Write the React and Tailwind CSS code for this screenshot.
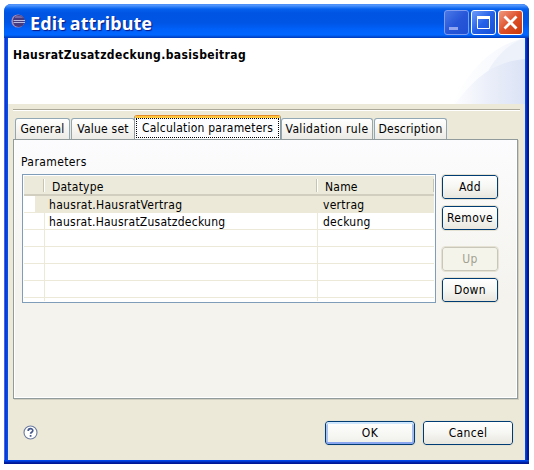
import React from "react";

const tabs = [
  { label: "General", box: "w-[55px] ml-[2px]" },
  { label: "Value set", box: "w-[64px] ml-[1px]" },
  { label: "Calculation parameters", active: true },
  { label: "Validation rule", box: "w-[92px] tracking-[0.35px]" },
  { label: "Description", box: "w-[73px] ml-[1px]" },
];

const rows = [
  { type: "hausrat.HausratVertrag", name: "vertrag", selected: true },
  { type: "hausrat.HausratZusatzdeckung", name: "deckung" },
  {},
  {},
  {},
  {},
];

function Tab({ tab }) {
  if (tab.active) {
    return (
      <div className="relative z-10 h-[24px] w-[147px] -ml-px shrink-0 rounded-t-[3px] border-x border-t border-x-[#919b9c] border-t-[#e68b2c] bg-[#fcfcfe]">
        <div className="h-[2px] bg-[#ffc73c]" />
        <div className="mx-[1px] flex h-[20px] items-center justify-center whitespace-nowrap border border-dotted border-black">
          {tab.label}
        </div>
      </div>
    );
  }
  return (
    <div
      className={`${tab.box} flex h-[21px] shrink-0 items-center justify-center whitespace-nowrap rounded-t-[3px] border-x border-t border-[#91a7b4] bg-linear-to-b from-white to-[#ecebe6]`}
    >
      {tab.label}
    </div>
  );
}

function Button({ label, size = "w-[56px]", primary, disabled }) {
  const look = disabled
    ? "border-[#c9c7ba] bg-[#f5f4ea] text-[#a1a192]"
    : primary
      ? "border-[#003c74] bg-linear-to-b from-white to-[#f0f0ea] shadow-[inset_0_2px_0_#cee7ff,inset_0_-2px_0_#89a6ee,inset_2px_0_0_#a9c4f2,inset_-2px_0_0_#a0bcf0]"
      : "border-[#003c74] bg-linear-to-b from-white via-[#f6f6f3] to-[#e8e6dd]";
  return (
    <button className={`${size} ${look} flex h-[24px] shrink-0 items-center justify-center rounded-[3px] border tracking-[0.35px] outline outline-[#e5e2d4]`}>
      {label}
    </button>
  );
}

function Eclipse() {
  return (
    <svg className="h-[14px] w-[14px] shrink-0" viewBox="0 0 14 14">
      <circle cx="7" cy="7" r="6.6" fill="#a98bb4" />
      <circle cx="7.8" cy="7" r="6" fill="#45397f" />
      <path d="M4 2.5Q7 .8 11 2.5L12 4H4z" fill="#7468a6" />
      <path d="M2.5 6.5H14M2.5 8.5H14" stroke="#b9bbe0" strokeWidth="1" />
    </svg>
  );
}

function Caption({ kind }) {
  const look = {
    min: "border-[#7f9cf0] bg-linear-to-br from-[#4a78e8] via-[#2856d8] to-[#1f4fd4]",
    max: "border-white bg-linear-to-br from-[#6d9bf8] via-[#2461e8] to-[#1550d8]",
    close: "border-white bg-linear-to-br from-[#ee9a80] via-[#dd4f28] to-[#c93806]",
  }[kind];
  return (
    <div className={`${look} h-[25px] w-[25px] rounded-[3px] border`}>
      <svg className="h-[23px] w-[23px]" viewBox="0 0 23 23" fill="none">
        {kind === "min" && <path d="M4 17.5h9" stroke="#92a5ee" strokeWidth="3" />}
        {kind === "max" && (
          <>
            <path d="M5.5 6v11.5h12V6" stroke="#fff" />
            <path d="M5 6.5h13" stroke="#fff" strokeWidth="3" />
          </>
        )}
        {kind === "close" && <path d="M5.5 5.5l12 12M17.5 5.5l-12 12" stroke="#fff" strokeWidth="2.8" />}
      </svg>
    </div>
  );
}

export default function App() {
  return (
    <div className="h-[470px] w-[534px] overflow-hidden bg-white pl-[4px] pt-[4px] font-['DejaVu_Sans_Condensed','DejaVu_Sans',sans-serif] text-[12px] leading-[16px] tracking-[0.22px] text-black [font-stretch:condensed]">
      <div className="flex h-[460px] w-[525px] flex-col overflow-hidden rounded-t-[7px] bg-[linear-gradient(90deg,#5068dc_0,#5068dc_1px,#0831d9_1px,#0655e8_4px,#0040e0_520px,#0046e8_522px,#001ea0_523px,#00138c_525px)]">
        <div className="flex h-[34px] shrink-0 items-center bg-[linear-gradient(180deg,#3f86f0_0,#5a9bff_1px,#2b7df5_3px,#0660ee_5px,#0054e3_9px,#0055e5_19px,#0062fb_26px,#0066ff_31px,#0048d0_33px,#0038b8_34px)] pl-[7px] pr-[6px]">
          <Eclipse />
          <div className="ml-[5px] flex-1 whitespace-nowrap pt-[3px] font-['Noto_Sans',sans-serif] text-[18px] font-bold leading-[24px] tracking-[0.1px] text-white [text-shadow:1px_1px_1px_#0a1883]">
            Edit attribute
          </div>
          <div className="flex gap-[2px] pt-[3px]">
            <Caption kind="min" />
            <Caption kind="max" />
            <Caption kind="close" />
          </div>
        </div>

        <div className="ml-[4px] flex h-[422px] w-[517px] shrink-0 flex-col bg-[#ece9d8]">
          <div className="flex h-[66px] shrink-0 justify-between bg-white">
            <div className="whitespace-nowrap pl-[5px] pt-[9px] font-bold tracking-[0.38px]">
              HausratZusatzdeckung.basisbeitrag
            </div>
            <svg className="h-[66px] w-[75px] shrink-0" viewBox="0 0 75 66">
              <defs>
                <linearGradient id="sweep" x1="0" x2="1">
                  <stop offset="0" stopColor="#fdfdff" />
                  <stop offset=".5" stopColor="#eaeef9" />
                  <stop offset="1" stopColor="#dbe3f5" />
                </linearGradient>
                <linearGradient id="sweepLight" x1="0" x2="1">
                  <stop offset="0" stopColor="#fff" />
                  <stop offset="1" stopColor="#f3f6fc" />
                </linearGradient>
              </defs>
              <path d="M2 66C16 38 38 8 75 0v66z" fill="url(#sweepLight)" />
              <path d="M36 37C46 17 60 5 75 0v25z" fill="#edf1fa" />
              <path d="M5 66C20 47 38 24 75 21v45z" fill="url(#sweep)" />
            </svg>
          </div>
          <div className="ml-[5px] mt-[5px] h-[2px] w-[507px] shrink-0 border-b border-t border-b-white border-t-[#aca899]" />

          <div className="ml-[5px] mt-[5px] flex h-[23px] w-[505px] shrink-0 items-end">
            {tabs.map((t) => (
              <Tab key={t.label} tab={t} />
            ))}
          </div>
          <div className="ml-[5px] flex h-[260px] w-[505px] shrink-0 flex-col border border-[#919b9c] bg-linear-to-b from-[#fcfcfe] to-[#f4f3ee] to-60% pl-[8px] shadow-[inset_1px_0_0_#fff,inset_-1px_-1px_0_#fff,1px_1px_0_#d0cebf]">
            <div className="-ml-px h-[34px] pt-[14px] tracking-[0.4px]">Parameters</div>
            <div className="flex gap-[6px]">
              <div className="flex h-[129px] w-[414px] flex-col border border-[#7f9db9] bg-white p-px">
                <div className="flex h-[20px] shrink-0 items-center border-b-2 border-b-[#d2cebf] bg-[#ebeadb]">
                  <div className="h-[13px] w-[20px] border-r border-[#c7c5b2] shadow-[1px_0_0_#fff]" />
                  <div className="h-[13px] w-[273px] border-r border-[#c7c5b2] pl-[8px] leading-[16px] shadow-[1px_0_0_#fff]">
                    Datatype
                  </div>
                  <div className="h-[13px] w-[117px] border-r border-[#c7c5b2] pl-[8px] leading-[16px]">Name</div>
                </div>
                <div className="flex h-[105px] flex-col overflow-hidden tracking-[0.25px]">
                  {rows.map((r, i) => (
                    <div key={i} className="flex h-[17px] shrink-0 border-b border-[#ece9d8] leading-[18px]">
                      <div className={r.selected ? "w-[11px]" : "w-[21px] border-r border-[#ece9d8]"} />
                      <div
                        className={
                          r.selected
                            ? "w-[283px] bg-[#ece9d8] pl-[14px] tracking-[0.3px]"
                            : "w-[273px] border-r border-[#ece9d8] pl-[4px]"
                        }
                      >
                        {r.type}
                      </div>
                      <div className={`flex-1 pl-[5px] ${r.selected ? "bg-[#ece9d8]" : ""}`}>{r.name}</div>
                    </div>
                  ))}
                  <div className="flex h-[3px] shrink-0">
                    <div className="w-[21px] border-r border-[#ece9d8]" />
                    <div className="w-[273px] border-r border-[#ece9d8]" />
                  </div>
                </div>
              </div>
              <div className="flex flex-col pt-px">
                <Button label="Add" />
                <div className="h-[7px]" />
                <Button label="Remove" />
                <div className="h-[17px]" />
                <Button label="Up" disabled />
                <div className="h-[7px]" />
                <Button label="Down" />
              </div>
            </div>
          </div>

          <div className="flex items-start pl-[15px] pt-[22px]">
            <svg className="mt-[4px] h-[15px] w-[15px]" viewBox="0 0 15 15" fill="none">
              <circle cx="7.5" cy="7.5" r="6.5" fill="#fff" stroke="#6c7ba0" strokeWidth="1.1" />
              <path d="M5.2 5.9c0-3 4.6-3 4.6-.3 0 1.6-2.2 1.6-2.2 3.2M7.6 10v1.8" stroke="#46598c" strokeWidth="1.7" />
            </svg>
            <div className="ml-[287px] flex gap-[8px]">
              <Button label="OK" size="w-[90px]" primary />
              <Button label="Cancel" size="w-[90px]" />
            </div>
          </div>
        </div>
        <div className="h-[4px] shrink-0 bg-[linear-gradient(180deg,#0046e8_0,#0046e8_1px,#0026b0_2px,#00138c_4px)]" />
      </div>
    </div>
  );
}
